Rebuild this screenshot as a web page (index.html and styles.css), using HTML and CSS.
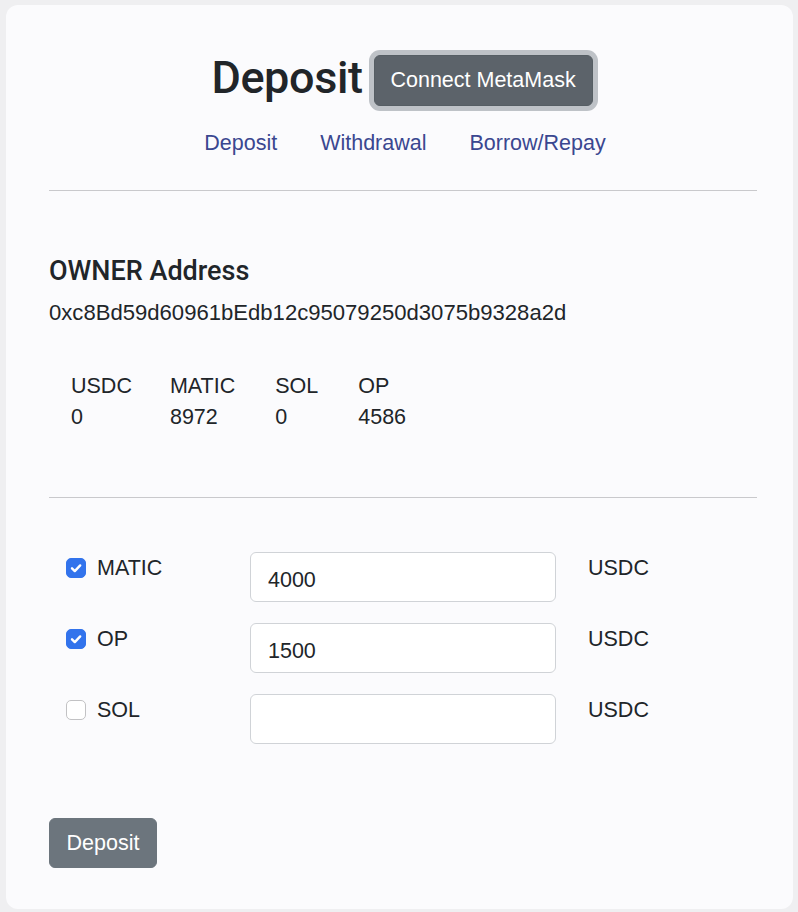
FILE: index.html
```html
<!DOCTYPE html>
<html>
<head>
<meta charset="utf-8">
<link rel="stylesheet" href="styles.css">
</head>
<body>
<div class="card">
  <div class="header">
    <h2 class="title">Deposit</h2>
    <button class="btn btn-connect">Connect MetaMask</button>
  </div>
  <nav class="nav">
    <a href="#">Deposit</a>
    <a href="#">Withdrawal</a>
    <a href="#">Borrow/Repay</a>
  </nav>
  <hr class="rule rule-top">
  <h5 class="owner">OWNER Address</h5>
  <div class="address">0xc8Bd59d60961bEdb12c95079250d3075b9328a2d</div>
  <table class="balances">
    <tr><td>USDC</td><td>MATIC</td><td>SOL</td><td>OP</td></tr>
    <tr><td>0</td><td>8972</td><td>0</td><td>4586</td></tr>
  </table>
  <hr class="rule rule-mid">
  <div class="rows">
    <div class="row">
      <label class="check"><span class="box checked"><svg viewBox="0 0 20 20" width="20" height="20"><path d="M6 10.3l2.8 2.8L14.2 7.4" fill="none" stroke="#fff" stroke-width="2.4" stroke-linecap="round" stroke-linejoin="round"/></svg></span>MATIC</label>
      <input class="field" type="text" value="4000">
      <span class="unit">USDC</span>
    </div>
    <div class="row">
      <label class="check"><span class="box checked"><svg viewBox="0 0 20 20" width="20" height="20"><path d="M6 10.3l2.8 2.8L14.2 7.4" fill="none" stroke="#fff" stroke-width="2.4" stroke-linecap="round" stroke-linejoin="round"/></svg></span>OP</label>
      <input class="field" type="text" value="1500">
      <span class="unit">USDC</span>
    </div>
    <div class="row">
      <label class="check"><span class="box"></span>SOL</label>
      <input class="field" type="text" value="">
      <span class="unit">USDC</span>
    </div>
  </div>
  <button class="btn btn-deposit">Deposit</button>
</div>
</body>
</html>
```

FILE: styles.css
```css
html, body {
  margin: 0;
  padding: 0;
}
body {
  background: #efeff1;
  padding: 5px 5px 3px 6px;
  font-family: "Liberation Sans", Arial, sans-serif;
  color: #212529;
  font-size: 21.5px;
  line-height: 32px;
}
.card {
  background: #fbfbfd;
  border-radius: 12px;
  height: 904px;
  box-sizing: border-box;
  padding: 50px 36px 0 43px;
}
.header {
  display: flex;
  justify-content: center;
  align-items: center;
  gap: 11px;
  height: 51px;
  padding-right: 2px;
}
.title {
  margin: 0 0 7px 0;
  font-family: Roboto, "Liberation Sans", sans-serif;
  font-weight: 500;
  font-size: 45px;
  line-height: 51px;
  letter-spacing: -0.4px;
}
.btn {
  font-family: "Liberation Sans", Arial, sans-serif;
  font-size: 21.5px;
  color: #fff;
  border-radius: 6px;
  cursor: pointer;
}
.btn-connect {
  background: #5c636a;
  border: 1px solid #565e64;
  box-shadow: 0 0 0 5px rgba(130, 138, 145, 0.5);
  height: 51px;
  width: 219px;
  padding: 0;
}
.nav {
  display: flex;
  justify-content: center;
  gap: 43px;
  margin-top: 21px;
  padding-left: 4px;
}
.nav a {
  color: #3a4790;
  text-decoration: none;
}
.rule {
  border: 0;
  border-top: 1px solid #c9c9cc;
  margin: 0;
}
.rule-top { margin-top: 31px; }
.owner {
  margin: 65px 0 0 0;
  font-family: Roboto, "Liberation Sans", sans-serif;
  font-weight: 500;
  font-size: 27px;
  line-height: 30px;
}
.address {
  margin-top: 11px;
  font-size: 22.1px;
}
.balances {
  margin-top: 42px;
  border-collapse: collapse;
}
.balances td {
  padding: 0 20px;
  height: 31px;
  line-height: 31px;
}
.balances td:first-child {
  padding-left: 22px;
  padding-right: 18px;
}
.rule-mid { margin-top: 64px; }
.rows {
  margin-top: 54px;
  display: flex;
  flex-direction: column;
  gap: 21px;
}
.row {
  display: grid;
  grid-template-columns: 201px 306px auto;
  align-items: start;
}
.check {
  display: flex;
  align-items: flex-start;
  padding-left: 17px;
  gap: 11px;
}
.box {
  width: 20px;
  height: 20px;
  margin-top: 6px;
  box-sizing: border-box;
  border: 1px solid #c2c2c4;
  border-radius: 5px;
  background: #fff;
  display: block;
}
.box svg { display: block; margin: -1px; }
.box.checked {
  background: #3273ec;
  border-color: #3273ec;
}
.field {
  box-sizing: border-box;
  width: 306px;
  height: 50px;
  border: 1px solid #d0d3d7;
  border-radius: 6px;
  background: #fff;
  padding: 6px 17px 0 17px;
  font-family: "Liberation Sans", Arial, sans-serif;
  font-size: 21.5px;
  color: #212529;
  outline: none;
}
.unit {
  margin-left: 32px;
}
.btn-deposit {
  margin-top: 74px;
  background: #6c757d;
  border: 1px solid #6c757d;
  width: 108px;
  height: 50px;
  padding: 0;
}
```
